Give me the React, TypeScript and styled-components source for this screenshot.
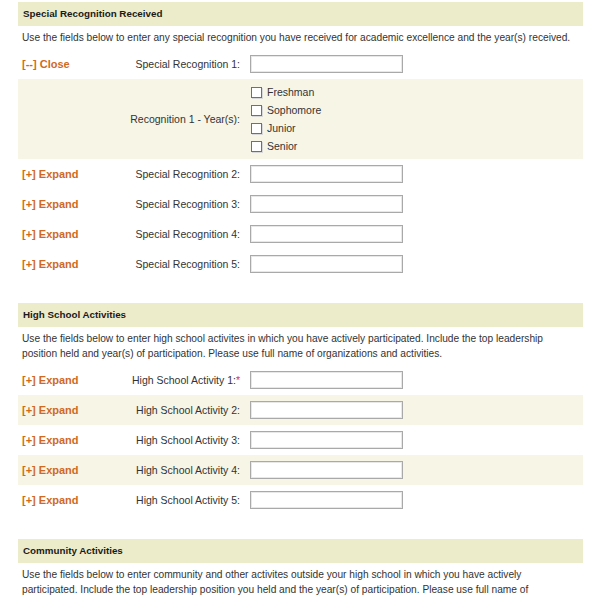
import React from 'react';
import styled, { createGlobalStyle } from 'styled-components';

const GlobalStyle = createGlobalStyle`
  body {
    margin: 0;
    background: #fff;
    font-family: "Liberation Sans", Arial, sans-serif;
    color: #333;
  }
`;

const Page = styled.div`
  width: 565px;
  padding: 2px 0 0 18px;
`;

const Section = styled.section`
  margin-bottom: 24px;
`;

const Header = styled.h2`
  margin: 0;
  height: 24px;
  line-height: 24px;
  padding: 0 5px;
  background: #ecebca;
  font-size: 9.8px;
  font-weight: bold;
  color: #1a1a1a;
`;

const Desc = styled.p`
  margin: 0;
  padding: 4px 4px;
  font-size: 10.2px;
  line-height: 15px;
`;

const Row = styled.div<{ $shade?: boolean }>`
  display: grid;
  grid-template-columns: 94px 114px 1fr;
  column-gap: 10px;
  align-items: center;
  height: 30px;
  padding-left: 4px;
  background: ${p => (p.$shade ? '#f6f5e6' : 'transparent')};
`;

const YearsRow = styled(Row)`
  height: 80px;
`;

const Toggle = styled.a`
  color: #d0691f;
  font-size: 11px;
  font-weight: bold;
  text-decoration: none;
  cursor: pointer;
`;

const Label = styled.label`
  text-align: right;
  font-size: 10.5px;
  white-space: nowrap;
`;

const Req = styled.span`
  color: #e03030;
`;

const TextInput = styled.input`
  box-sizing: border-box;
  width: 153px;
  height: 18px;
  border: 1px solid #a9a9a9;
  box-shadow: inset 0 0 0 1px #e8e8e8;
  background: #fff;
  padding: 0 3px;
  margin: 0;
`;

const CheckList = styled.div`
  grid-column: 3;
  padding: 4px 0;
  display: flex;
  flex-direction: column;
`;

const CheckItem = styled.label`
  display: flex;
  align-items: center;
  height: 18px;
  font-size: 10.5px;
  gap: 5px;
`;

const Box = styled.input`
  appearance: none;
  margin: 0 0 0 1px;
  width: 11px;
  height: 11px;
  border: 1px solid #707070;
  background: #fff;
  box-shadow: 1px 1px 0 #d8d8d8;
`;

const years = ['Freshman', 'Sophomore', 'Junior', 'Senior'];

const App: React.FC = () => {
  return (
    <Page>
      <GlobalStyle />
      <Section>
        <Header>Special Recognition Received</Header>
        <Desc>
          Use the fields below to enter any special recognition you have received for academic
          excellence and the year(s) received.
        </Desc>
        <Row>
          <Toggle>[--] Close</Toggle>
          <Label>Special Recognition 1:</Label>
          <TextInput />
        </Row>
        <YearsRow $shade>
          <span />
          <Label>Recognition 1 - Year(s):</Label>
          <CheckList>
            {years.map(y => (
              <CheckItem key={y}>
                <Box type="checkbox" />
                {y}
              </CheckItem>
            ))}
          </CheckList>
        </YearsRow>
        {[2, 3, 4, 5].map(n => (
          <Row key={n}>
            <Toggle>[+] Expand</Toggle>
            <Label>Special Recognition {n}:</Label>
            <TextInput />
          </Row>
        ))}
      </Section>

      <Section>
        <Header>High School Activities</Header>
        <Desc>
          Use the fields below to enter high school activites in which you have actively
          participated. Include the top leadership position held and year(s) of participation.
          Please use full name of organizations and activities.
        </Desc>
        {[1, 2, 3, 4, 5].map(n => (
          <Row key={n} $shade={n % 2 === 0}>
            <Toggle>[+] Expand</Toggle>
            <Label>
              High School Activity {n}:{n === 1 && <Req>*</Req>}
            </Label>
            <TextInput />
          </Row>
        ))}
      </Section>

      <Section>
        <Header>Community Activities</Header>
        <Desc>
          Use the fields below to enter community and other activites outside your high school in
          which you have actively participated. Include the top leadership position you held and
          the year(s) of participation. Please use full name of organizations and activities.
        </Desc>
      </Section>
    </Page>
  );
};

export default App;
